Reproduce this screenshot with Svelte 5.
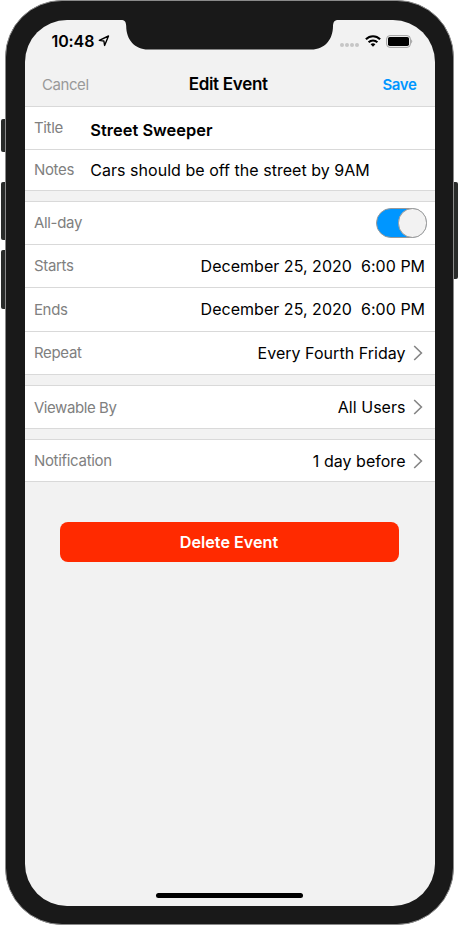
<script lang="ts">
  type Row = {
    id: string;
    label: string;
    value?: string;
    kind: "text" | "toggle" | "date" | "link";
  };

  const groups: Row[][] = [
    [
      { id: "title", label: "Title", value: "Street Sweeper", kind: "text" },
      {
        id: "notes",
        label: "Notes",
        value: "Cars should be off the street by 9AM",
        kind: "text",
      },
    ],
    [
      { id: "all-day", label: "All-day", kind: "toggle" },
      {
        id: "starts",
        label: "Starts",
        value: "December 25, 2020  6:00 PM",
        kind: "date",
      },
      {
        id: "ends",
        label: "Ends",
        value: "December 25, 2020  6:00 PM",
        kind: "date",
      },
      {
        id: "repeat",
        label: "Repeat",
        value: "Every Fourth Friday",
        kind: "link",
      },
    ],
    [
      {
        id: "viewable",
        label: "Viewable By",
        value: "All Users",
        kind: "link",
      },
    ],
    [
      {
        id: "notification",
        label: "Notification",
        value: "1 day before",
        kind: "link",
      },
    ],
  ];

  let allDay = $state(true);
</script>

<div class="device">
  <span class="key mute"></span>
  <span class="key volume-up"></span>
  <span class="key volume-down"></span>
  <span class="key power"></span>

  <div class="body">
    <main class="screen">
      <svg class="notch" width="218" height="30" viewBox="0 0 218 30">
        <path
          d="M0 0C3.5 0 5 1.5 5.2 6C5.2 20 14 29.5 27 29.5H190.4C203.4 29.5 212 20 212 6C212.2 1.5 213.9 0 217.4 0Z"
        />
      </svg>

      <div class="status-bar">
        <span class="time">10:48</span>
        <svg class="location" width="12" height="12" viewBox="0 0 12 12">
          <path d="M1.3 5.4L10.5 1L6.6 10.4L5.9 6Z" />
        </svg>
        <span class="dots"><i></i><i></i><i></i><i></i></span>
        <svg class="wifi" width="16" height="12" viewBox="0 0 16 12">
          <path d="M.9 4.3C4.9 .2 11.1 .2 15.1 4.3M3.6 7.3C6.1 4.9 9.9 4.9 12.4 7.3" />
          <path class="fill" d="M5.6 9.2C7 8 9 8 10.4 9.2L8 11.8Z" />
        </svg>
        <svg class="battery" width="27" height="13" viewBox="0 0 27 13">
          <rect class="shell" x=".6" y=".6" width="23.8" height="11.8" rx="3.4" />
          <rect x="2" y="2" width="21" height="9" rx="1.8" />
          <path class="tip" d="M25.2 4.3Q27.2 6.5 25.2 8.7Z" />
        </svg>
      </div>

      <header>
        <button class="cancel" type="button">Cancel</button>
        <h1>Edit Event</h1>
        <button class="save" type="button">Save</button>
      </header>

      {#each groups as group}
        <section>
          {#each group as row (row.id)}
            <div class="row {row.kind} {row.id}">
              <span class="label">{row.label}</span>
              {#if row.kind === "toggle"}
                <button
                  class="switch"
                  class:on={allDay}
                  type="button"
                  role="switch"
                  aria-checked={allDay}
                  aria-label={row.label}
                  onclick={() => (allDay = !allDay)}
                >
                  <span class="knob"></span>
                </button>
              {:else}
                <span class="value">{row.value}</span>
              {/if}
              {#if row.kind === "link"}
                <svg class="chevron" width="10" height="16" viewBox="0 0 10 16">
                  <path d="M1.2 1L8.4 8L1.2 15" />
                </svg>
              {/if}
            </div>
          {/each}
        </section>
      {/each}

      <button class="delete" type="button">Delete Event</button>
      <div class="home-indicator"></div>
    </main>
  </div>
</div>

<style>
  :global(body) {
    background: #fff;
  }

  .device {
    position: relative;
    width: 458px;
    height: 926px;
    overflow: hidden;
    font-family: Inter, "Liberation Sans", sans-serif;
    color: #000;
  }

  .body {
    position: relative;
    box-sizing: border-box;
    width: 449px;
    height: 925px;
    margin-left: 5px;
    padding: 20px 19.5px 19.5px;
    border: 0.5px solid #8a8a8a;
    border-radius: 57px;
    background: #191919;
  }

  .screen {
    position: relative;
    display: flex;
    flex-direction: column;
    box-sizing: border-box;
    width: 410px;
    height: 886px;
    margin: -1px 0 0 -1px;
    border-radius: 42px;
    background: #f2f2f2;
    overflow: hidden;
  }

  .key {
    position: absolute;
    left: 1px;
    width: 8px;
    border-radius: 2px;
    background: #292b2a;
  }

  .mute {
    top: 119px;
    height: 33px;
  }

  .volume-up {
    top: 182px;
    height: 58px;
  }

  .volume-down {
    top: 250px;
    height: 59px;
  }

  .power {
    top: 182px;
    left: 450px;
    height: 97px;
  }

  .notch {
    position: absolute;
    top: 0;
    left: 96px;
    fill: #191919;
  }

  .status-bar {
    display: flex;
    align-items: center;
    height: 42px;
    padding: 0 22px 0 27px;
  }

  .time {
    font-size: 16px;
    font-weight: 600;
    letter-spacing: -0.1px;
  }

  .location {
    margin-left: 4px;
    fill: none;
    stroke: #000;
    stroke-width: 1.4;
    stroke-linejoin: round;
  }

  .dots {
    display: flex;
    gap: 1px;
    margin: 8px 6px 0 auto;
  }

  .dots i {
    width: 4px;
    height: 4px;
    border-radius: 50%;
    background: #c6c6c6;
  }

  .wifi {
    fill: none;
    stroke: #000;
    stroke-width: 2.1;
  }

  .wifi .fill {
    fill: #000;
    stroke: none;
  }

  .battery {
    margin-left: 5px;
  }

  .battery .shell {
    fill: none;
    stroke: #a0a0a0;
  }

  .battery .tip {
    fill: #a0a0a0;
  }

  button {
    padding: 0;
    border: 0;
    background: none;
    font: inherit;
  }

  header {
    display: grid;
    grid-template-columns: 1fr auto 1fr;
    align-items: center;
    box-sizing: border-box;
    height: 45px;
    padding: 0 18px 0 17.4px;
    border-bottom: 1px solid #d9d9d9;
  }

  h1 {
    margin: 0 2px 0 0;
    font-size: 17px;
    font-weight: 600;
    line-height: 20px;
    letter-spacing: -0.3px;
  }

  .cancel {
    justify-self: start;
    color: #999;
    font-size: 15px;
    letter-spacing: -0.4px;
  }

  .save {
    justify-self: end;
    color: #0096ff;
    font-size: 15px;
    font-weight: 600;
    letter-spacing: -0.35px;
  }

  section {
    margin-bottom: 10px;
    background: #fff;
  }

  section + section {
    border-top: 1px solid #d9d9d9;
  }

  .row {
    display: flex;
    align-items: center;
    box-sizing: border-box;
    height: 43px;
    padding: 0 9.4px;
    border-bottom: 1px solid #d9d9d9;
  }

  .row.notes {
    height: 41px;
  }

  .row.ends {
    height: 44px;
  }

  .row.notification {
    height: 42px;
  }

  .row.notes,
  .row.starts,
  .row.ends,
  .row.repeat {
    padding-bottom: 1px;
  }

  .label {
    width: 56.4px;
    flex: none;
    color: #808080;
    font-size: 15px;
    letter-spacing: -0.3px;
    white-space: nowrap;
  }

  .all-day .label {
    margin-bottom: 2px;
  }

  .viewable .label {
    letter-spacing: -0.42px;
  }

  .value {
    margin-left: auto;
    font-size: 16px;
    letter-spacing: 0.03px;
    white-space: pre;
  }

  .text .value {
    margin-left: 0;
  }

  .title .label {
    margin-bottom: 1px;
  }

  .title .value {
    margin-top: 4px;
    font-size: 16.4px;
    font-weight: 600;
  }

  .chevron {
    margin: 0 2.6px 0 7px;
    fill: none;
    stroke: #858585;
    stroke-width: 1.6;
  }

  .switch {
    display: flex;
    box-sizing: border-box;
    width: 51px;
    height: 30px;
    margin-left: auto;
    margin-right: -1.4px;
    border: 1px solid #999;
    border-radius: 15px;
    background: #ddd;
  }

  .switch.on {
    justify-content: flex-end;
    background: #0096ff;
  }

  .knob {
    box-sizing: border-box;
    width: 29px;
    height: 30px;
    margin: -1px;
    border: 1px solid #999;
    border-radius: 15px;
    background: #f2f2f2;
  }

  .delete {
    width: 339px;
    height: 40px;
    margin: 29.5px 0 0 35px;
    border-radius: 8px;
    background: #ff2a00;
    color: #fff;
    font-size: 16.2px;
    font-weight: 600;
  }

  .home-indicator {
    width: 147px;
    height: 5px;
    margin: auto auto 8px 131px;
    border-radius: 3px;
    background: #000;
  }
</style>
